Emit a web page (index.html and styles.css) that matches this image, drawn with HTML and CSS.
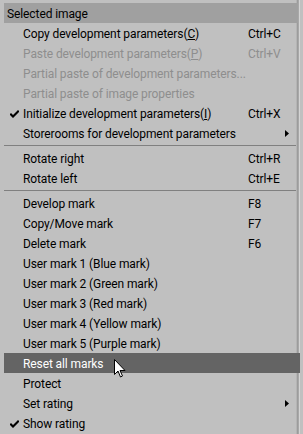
FILE: index.html
```html
<!DOCTYPE html>
<html lang="en">
<head>
    <meta charset="UTF-8">
    <title>Selected image menu</title>
    <link rel="stylesheet" href="styles.css">
</head>
<body>

    <div class="menu">
        <div class="menu-header">Selected image</div>

        <div class="item"><span class="check"></span><span class="label">Copy development parameters(<u>C</u>)</span><span class="key">Ctrl+C</span><span class="sub"></span></div>
        <div class="item disabled"><span class="check"></span><span class="label">Paste development parameters(<u>P</u>)</span><span class="key">Ctrl+V</span><span class="sub"></span></div>
        <div class="item disabled"><span class="check"></span><span class="label">Partial paste of development parameters...</span><span class="key"></span><span class="sub"></span></div>
        <div class="item disabled"><span class="check"></span><span class="label">Partial paste of image properties</span><span class="key"></span><span class="sub"></span></div>
        <div class="item">
            <span class="check"><svg width="9" height="8" viewBox="0 0 9 8"><path d="M0 4 L1 3 L3 5 L8 0 L9 1 L9 2 L3 8 L0 5 Z" fill="#000"/></svg></span>
            <span class="label">Initialize development parameters(<u>I</u>)</span><span class="key">Ctrl+X</span><span class="sub"></span>
        </div>
        <div class="item">
            <span class="check"></span><span class="label">Storerooms for development parameters</span><span class="key"></span>
            <span class="sub"><svg width="4" height="7" viewBox="0 0 4 7"><path d="M0 0 L4 3.5 L0 7 Z" fill="#000"/></svg></span>
        </div>

        <div class="separator"></div>

        <div class="item"><span class="check"></span><span class="label">Rotate right</span><span class="key">Ctrl+R</span><span class="sub"></span></div>
        <div class="item"><span class="check"></span><span class="label">Rotate left</span><span class="key">Ctrl+E</span><span class="sub"></span></div>

        <div class="separator"></div>

        <div class="item"><span class="check"></span><span class="label">Develop mark</span><span class="key">F8</span><span class="sub"></span></div>
        <div class="item"><span class="check"></span><span class="label">Copy/Move mark</span><span class="key">F7</span><span class="sub"></span></div>
        <div class="item"><span class="check"></span><span class="label">Delete mark</span><span class="key">F6</span><span class="sub"></span></div>
        <div class="item"><span class="check"></span><span class="label">User mark 1 (Blue mark)</span><span class="key"></span><span class="sub"></span></div>
        <div class="item"><span class="check"></span><span class="label">User mark 2 (Green mark)</span><span class="key"></span><span class="sub"></span></div>
        <div class="item"><span class="check"></span><span class="label">User mark 3 (Red mark)</span><span class="key"></span><span class="sub"></span></div>
        <div class="item"><span class="check"></span><span class="label">User mark 4 (Yellow mark)</span><span class="key"></span><span class="sub"></span></div>
        <div class="item"><span class="check"></span><span class="label">User mark 5 (Purple mark)</span><span class="key"></span><span class="sub"></span></div>
        <div class="item active">
            <span class="check"></span><span class="label">Reset all marks</span><span class="key"></span><span class="sub"></span>
            <!-- mouse pointer sitting over the hovered row -->
            <svg class="cursor" width="12" height="19" viewBox="0 0 12 19">
                <path d="M0.5 0.5 L0.5 15.5 L4 12 L6.5 18 L8.5 17 L6 11.5 L11 11.5 Z" fill="#fff" stroke="#000" stroke-width="1" stroke-linejoin="miter"/>
            </svg>
        </div>
        <div class="item"><span class="check"></span><span class="label">Protect</span><span class="key"></span><span class="sub"></span></div>
        <div class="item">
            <span class="check"></span><span class="label">Set rating</span><span class="key"></span>
            <span class="sub"><svg width="4" height="7" viewBox="0 0 4 7"><path d="M0 0 L4 3.5 L0 7 Z" fill="#000"/></svg></span>
        </div>
        <div class="item">
            <span class="check"><svg width="9" height="8" viewBox="0 0 9 8"><path d="M0 4 L1 3 L3 5 L8 0 L9 1 L9 2 L3 8 L0 5 Z" fill="#000"/></svg></span>
            <span class="label">Show rating</span><span class="key"></span><span class="sub"></span>
        </div>
    </div>

</body>
</html>
```

FILE: styles.css
```css
/* Basic styling */
body {
    margin: 0;
    background-color: #c0c0c0;
    font-family: Roboto, "Noto Sans", sans-serif;
    font-size: 12px;
    letter-spacing: -0.1px;
}

/* Popup menu frame */
.menu {
    width: 296px;
    height: 431px;
    padding: 3px 0 0 4px;
    background-color: #c0c0c0;
    box-shadow: inset -1px 0 0 #d4d4d4, inset -2px 0 0 #a8a8a8, inset -3px 0 0 #9c9c9c, inset -4px 0 0 #b4b4b4;
    overflow: hidden;
}

.menu-header {
    height: 20px;
    line-height: 22px;
    margin-right: 2px;
    padding-left: 3px;
    background-color: #a0a0a0;
    color: #000;
}

/* Menu rows */
.item {
    position: relative;
    display: flex;
    align-items: center;
    height: 20px;
    padding-top: 1px;
    box-sizing: border-box;
    color: #000;
    white-space: nowrap;
}
.item.disabled {
    color: #8e8e8e;
}
.item.active {
    background-color: #646464;
    color: #fff;
}
.check {
    width: 19px;
    flex-shrink: 0;
    display: flex;
    justify-content: center;
    padding-left: 2px;
    box-sizing: border-box;
}
.label {
    flex: 1;
    min-width: 0;
}
.key {
    width: 37px;
    flex-shrink: 0;
}
.sub {
    width: 15px;
    flex-shrink: 0;
    display: flex;
    align-items: center;
}

.separator {
    height: 5px;
    position: relative;
}
.separator::after {
    content: "";
    position: absolute;
    left: 0;
    right: 4px;
    top: 2px;
    height: 1px;
    background-color: #808080;
}

/* Mouse pointer over the highlighted row */
.cursor {
    position: absolute;
    left: 110px;
    top: 6px;
}
```
